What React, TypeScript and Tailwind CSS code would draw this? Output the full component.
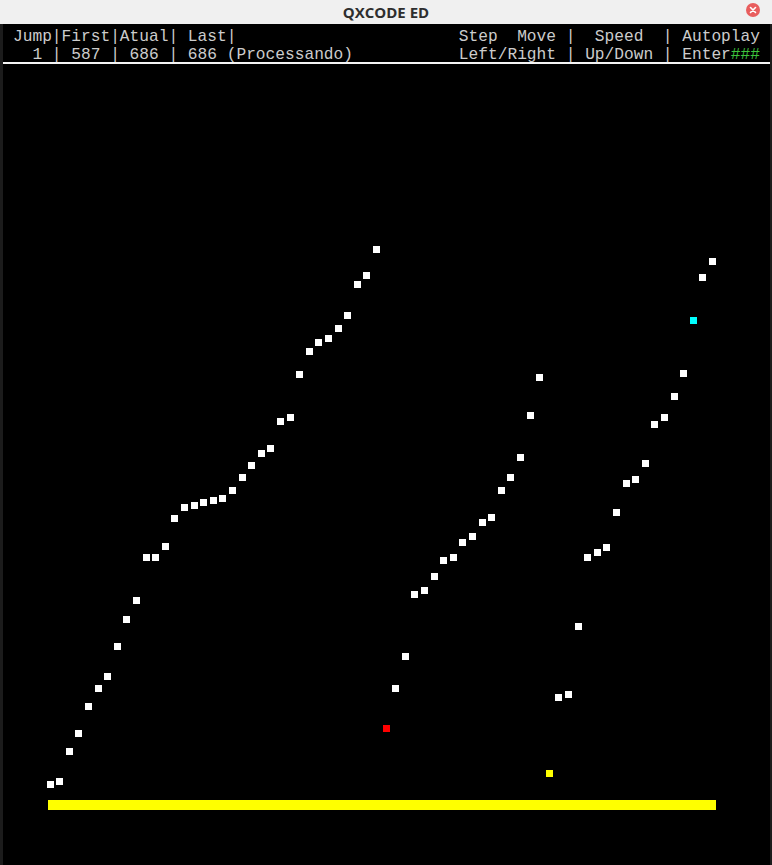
import React from "react";

// heights (page y of each dot centre), one per column; columns are 9.6px apart from x=50
const values = [
  784, 781, 751, 733, 706, 688, 676, 646, 619, 600, 557, 557, 546, 518, 507, 505, 502, 500, 498, 490,
  477, 465, 453, 448, 421, 417, 374, 351, 342, 338, 328, 315, 284, 275, 249, 728, 688, 656, 594, 590,
  576, 560, 557, 542, 536, 522, 517, 490, 477, 457, 415, 377, 773, 697, 694, 626, 557, 552, 547, 512,
  483, 479, 463, 424, 417, 396, 373, 320, 277, 261,
];

const highlight: Record<number, string> = { 35: "#ff0000", 52: "#ffff00", 67: "#00ffff" };

// plot svg starts at page (3, 64)
const OX = 3;
const OY = 64;

function Plot() {
  return (
    <svg width="767" height="801" className="block">
      {values.map((y, i) => {
        const cx = 50 + i * 9.6 - OX;
        const cy = y - OY;
        return (
          <rect
            key={i}
            x={Math.round(cx - 3.5)}
            y={Math.round(cy - 3.5)}
            width="7"
            height="7"
            fill={highlight[i] ?? "#ffffff"}
          />
        );
      })}
      <rect x={48 - OX} y={800 - OY} width={668} height={10} fill="#ffff00" />
    </svg>
  );
}

export default function App() {
  return (
    <div className="w-[772px] h-[865px] flex flex-col bg-black overflow-hidden">
      {/* title bar */}
      <div className="h-[24px] bg-[#f0f0f0] relative flex items-center justify-center">
        <span className="text-[15px] font-bold text-[#2e2e2e] font-['Open_Sans',sans-serif]">QXCODE ED</span>
        <span className="absolute right-[12px] top-[3px] w-[14px] h-[14px] rounded-full bg-[#e85d5d] flex items-center justify-center">
          <svg width="8" height="8" viewBox="0 0 8 8">
            <path d="M1.5 1.5 L6.5 6.5 M6.5 1.5 L1.5 6.5" stroke="#ffffff" strokeWidth="1.6" strokeLinecap="round" />
          </svg>
        </span>
      </div>

      {/* terminal */}
      <div className="flex-1 flex flex-col border-l-[3px] border-r-[2px] border-[#1c1c1c] bg-black">
        <div className="flex justify-between pl-[10px] pr-[10px] pt-[4px] h-[38px] font-['Liberation_Mono',monospace] text-[16.2px] leading-[18px] text-[#cccccc] whitespace-pre">
          <div>
            <div>Jump|First|Atual| Last|</div>
            <div>  1 | 587 | 686 | 686 (Processando)</div>
          </div>
          <div>
            <div>Step  Move |  Speed  | Autoplay</div>
            <div>
              Left/Right | Up/Down | Enter<span className="text-[#3ec43e]">###</span>
            </div>
          </div>
        </div>
        <div className="h-[2px] bg-[#f4f4f4]" />
        <Plot />
      </div>
    </div>
  );
}
